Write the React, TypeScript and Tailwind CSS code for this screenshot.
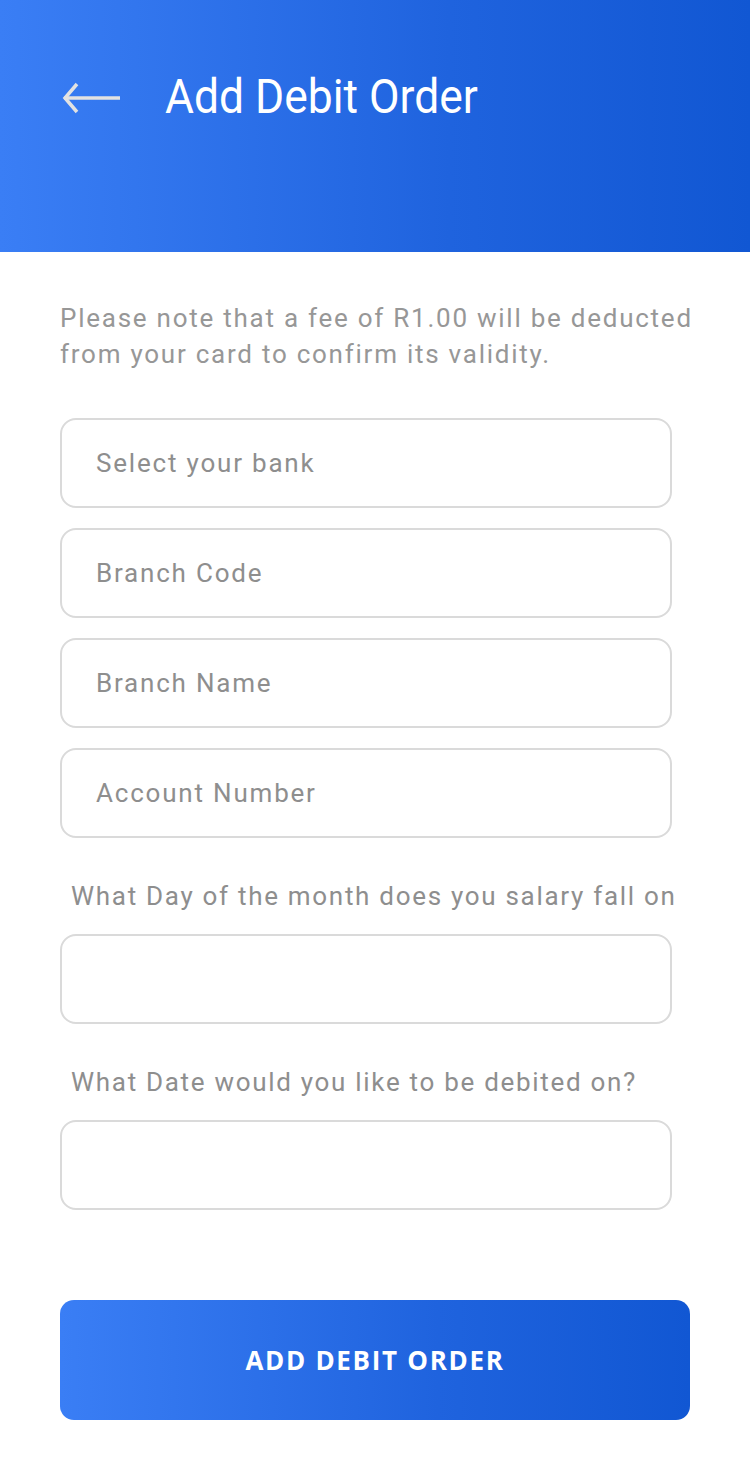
import React from "react";

function Field({ placeholder }: { placeholder?: string }) {
  return (
    <div className="h-[90px] w-[612px] rounded-[16px] border-2 border-[#dadada] bg-white flex items-center pl-[34px]">
      {placeholder ? (
        <span className="text-[26px] text-[#8e8e8e] leading-none tracking-[1.8px]">{placeholder}</span>
      ) : null}
    </div>
  );
}

export default function App() {
  return (
    <div className="w-[750px] min-h-[1474px] bg-white" style={{ fontFamily: "Roboto, 'Noto Sans', sans-serif" }}>
      <header className="h-[252px] w-full bg-gradient-to-r from-[#3a7ef5] via-[#1f63de] via-60% to-[#1157d3] flex items-start pt-[72px] pl-[62px]">
        <div className="flex items-center h-[50px]">
          <svg width="60" height="32" viewBox="0 0 60 32" fill="none" className="mt-[1px]">
            <path d="M2 16 H58" stroke="#e2e2e2" strokeWidth="3.5" />
            <path d="M15 2 L3 16 L15 30" stroke="#e2e2e2" strokeWidth="3.5" strokeLinejoin="miter" />
          </svg>
          <h1 className="ml-[43px] text-white text-[48px] leading-none origin-left scale-x-[0.925] whitespace-nowrap">
            Add Debit Order
          </h1>
        </div>
      </header>

      <main className="px-[60px] pt-[48px]">
        <p className="text-[26px] leading-[36px] text-[#979797] tracking-[1.75px] w-[640px]">
          Please note that a fee of R1.00 will be deducted from your card to confirm its validity.
        </p>

        <div className="mt-[46px] flex flex-col gap-[20px]">
          <Field placeholder="Select your bank" />
          <Field placeholder="Branch Code" />
          <Field placeholder="Branch Name" />
          <Field placeholder="Account Number" />
        </div>

        <p className="mt-[40px] ml-[11px] text-[26px] leading-[36px] text-[#8e8e8e] tracking-[1.7px] whitespace-nowrap">
          What Day of the month does you salary fall on
        </p>
        <div className="mt-[20px]">
          <Field />
        </div>

        <p className="mt-[40px] ml-[11px] text-[26px] leading-[36px] text-[#8e8e8e] tracking-[1.7px] whitespace-nowrap">
          What Date would you like to be debited on?
        </p>
        <div className="mt-[20px]">
          <Field />
        </div>

        <button className="mt-[90px] h-[120px] w-[630px] rounded-[14px] bg-gradient-to-r from-[#3a7ef5] via-[#1f63de] via-60% to-[#1157d3] flex items-center justify-center">
          <span className="text-white text-[26px] font-bold tracking-[1.7px]" style={{ fontFamily: "'Open Sans', 'Noto Sans', sans-serif" }}>
            ADD DEBIT ORDER
          </span>
        </button>
      </main>
    </div>
  );
}
